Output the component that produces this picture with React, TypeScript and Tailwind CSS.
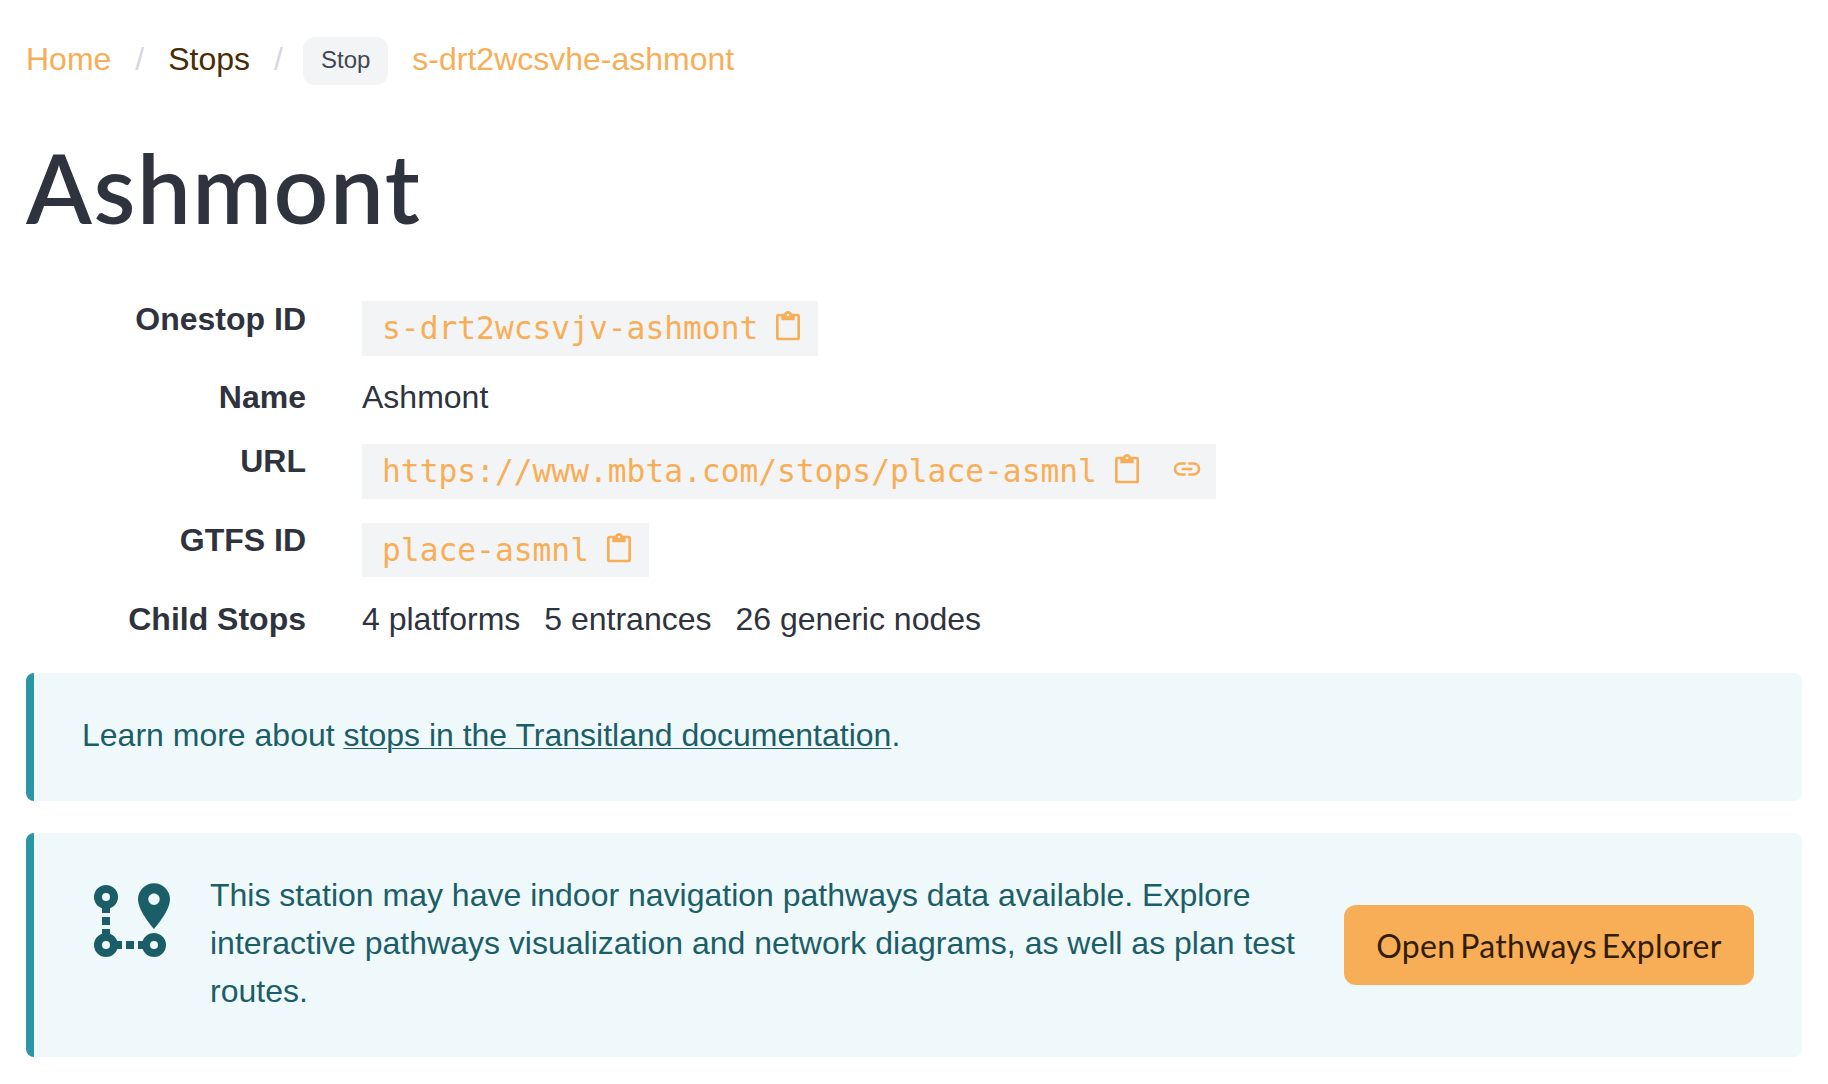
import type { ReactNode } from "react";

const ICONS = {
  paste:
    "M18.6,20H5.4A0.4,0.4 0 0,1 5,19.6V4H7V7H17V4H19V19.6A0.4,0.4 0 0,1 18.6,20M12,2A1,1 0 0,1 13,3A1,1 0 0,1 12,4A1,1 0 0,1 11,3A1,1 0 0,1 12,2M19,2H14.82C14.4,0.84 13.3,0 12,0C10.7,0 9.6,0.84 9.18,2H5A2,2 0 0,0 3,4V20A2,2 0 0,0 5,22H19A2,2 0 0,0 21,20V4A2,2 0 0,0 19,2Z",
  link: "M3.9,12C3.9,10.29 5.29,8.9 7,8.9H11V7H7A5,5 0 0,0 2,12A5,5 0 0,0 7,17H11V15.1H7C5.29,15.1 3.9,13.71 3.9,12M8,13H16V11H8V13M17,7H13V8.9H17C18.71,8.9 20.1,10.29 20.1,12C20.1,13.71 18.71,15.1 17,15.1H13V17H17A5,5 0 0,0 22,12A5,5 0 0,0 17,7Z",
  path: "M18,15A3,3 0 0,1 21,18A3,3 0 0,1 18,21C16.69,21 15.58,20.17 15.17,19H14V17H15.17C15.58,15.83 16.69,15 18,15M18,17A1,1 0 0,0 17,18A1,1 0 0,0 18,19A1,1 0 0,0 19,18A1,1 0 0,0 18,17M18,8A1.43,1.43 0 0,0 19.43,6.57C19.43,5.78 18.79,5.14 18,5.14C17.21,5.14 16.57,5.78 16.57,6.57A1.43,1.43 0 0,0 18,8M18,2.57A4,4 0 0,1 22,6.57C22,9.56 18,14 18,14C18,14 14,9.56 14,6.57A4,4 0 0,1 18,2.57M8.83,17H10V19H8.83C8.42,20.17 7.31,21 6,21A3,3 0 0,1 3,18C3,16.69 3.83,15.58 5,15.17V14H7V15.17C7.85,15.47 8.53,16.15 8.83,17M6,17A1,1 0 0,0 5,18A1,1 0 0,0 6,19A1,1 0 0,0 7,18A1,1 0 0,0 6,17M6,3A3,3 0 0,1 9,6C9,7.31 8.17,8.42 7,8.83V10H5V8.83C3.83,8.42 3,7.31 3,6A3,3 0 0,1 6,3M6,5A1,1 0 0,0 5,6A1,1 0 0,0 6,7A1,1 0 0,0 7,6A1,1 0 0,0 6,5M11,19V17H13V19H11M7,13H5V11H7V13Z",
};

function Icon({ name, className }: { name: keyof typeof ICONS; className: string }) {
  return (
    <svg viewBox="0 0 24 24" fill="currentColor" className={className}>
      <path d={ICONS[name]} />
    </svg>
  );
}

function Row({ label, className, children }: { label: string; className: string; children: ReactNode }) {
  return (
    <div className={`flex items-start ${className}`}>
      <dt className="w-[280px] text-right font-bold">{label}</dt>
      <dd className="ml-14">{children}</dd>
    </div>
  );
}

function CodeTag({ text, link, className }: { text: string; link?: boolean; className: string }) {
  return (
    <div className={`flex bg-[#f3f4f6] pl-5 pr-[14px] text-[#f8ae57] ${className}`}>
      <code className="font-['DejaVu_Sans_Mono',monospace] text-[31.25px] leading-[54px]">{text}</code>
      <Icon name="paste" className="ml-[14px] mt-[9.5px] h-8 w-8" />
      {link && <Icon name="link" className="-mr-px ml-7 mt-[9px] h-8 w-8" />}
    </div>
  );
}

function Notice({ className, children }: { className: string; children: ReactNode }) {
  return (
    <div className={`rounded-lg border-l-8 border-[#2a96a5] bg-[#eff8fb] px-12 text-[#1b5e67] ${className}`}>
      {children}
    </div>
  );
}

export default function App() {
  return (
    <main className="h-[1084px] w-[1828px] bg-white px-[26px] pt-[35px] font-['Liberation_Sans',Arial,sans-serif] text-[32px] leading-[48px] text-[#2e333d]">
      {/* Breadcrumb */}
      <nav className="flex h-[51px] items-start text-[#f8ae57]">
        <a>Home</a>
        <span className="ml-6 text-[#d5d8de]">/</span>
        <a className="ml-6 text-[#4a2c04]">Stops</a>
        <span className="ml-6 text-[#d5d8de]">/</span>
        <span className="ml-5 mt-[2px] h-12 rounded-xl bg-[#f3f4f6] px-[18px] text-2xl leading-[46px] text-[#404654]">Stop</span>
        <a className="ml-6">s-drt2wcsvhe-ashmont</a>
      </nav>

      <h1 className="mt-[47px] font-['Lato',sans-serif] text-[96px] font-semibold leading-[108px] tracking-[1.55px]">
        Ashmont
      </h1>

      {/* Stop details */}
      <dl className="mt-[54px]">
        <Row label="Onestop ID" className="h-[78px]">
          <CodeTag text="s-drt2wcsvjv-ashmont" className="mt-[6px] h-[55px]" />
        </Row>
        <Row label="Name" className="h-16">
          Ashmont
        </Row>
        <Row label="URL" className="h-[79px]">
          <CodeTag text="https://www.mbta.com/stops/place-asmnl" link className="mt-[7px] h-[55px]" />
        </Row>
        <Row label="GTFS ID" className="h-[79px]">
          <CodeTag text="place-asmnl" className="mt-[7px] h-[54px]" />
        </Row>
        <Row label="Child Stops" className="h-16">
          <div className="flex gap-6">
            <span>4 platforms</span>
            <span>5 entrances</span>
            <span>26 generic nodes</span>
          </div>
        </Row>
      </dl>

      <Notice className="mt-[14px] h-32 pt-[38px]">
        Learn more about{" "}
        <a className="underline decoration-[1px] underline-offset-[2px]">stops in the Transitland documentation</a>.
      </Notice>

      {/* Pathways */}
      <Notice className="mt-8 flex h-56 items-start pt-10">
        <Icon name="path" className="h-24 w-24 shrink-0" />
        <p className="-mt-[2px] ml-8 w-[1100px] shrink-0">
          This station may have indoor navigation pathways data available. Explore interactive pathways
          visualization and network diagrams, as well as plan test routes.
        </p>
        <button className="ml-auto mt-8 h-20 w-[410px] shrink-0 rounded-xl bg-[#f8ae57] pt-[2px] font-['Lato',sans-serif] text-[32px] tracking-[0.3px] [word-spacing:-3.6px] text-[#331d00]">
          Open Pathways Explorer
        </button>
      </Notice>
    </main>
  );
}
